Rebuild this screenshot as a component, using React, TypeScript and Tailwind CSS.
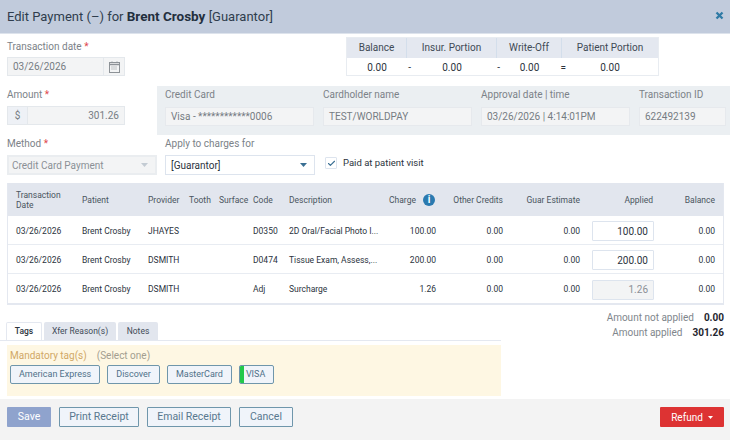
import { Check } from "lucide-react";

const ROW_GRID =
  "grid grid-cols-[66px_66px_41px_30px_34px_36px_100px_47px_67px_77px_75px_60px] items-center px-2";

const rows = [
  { provider: "JHAYES", code: "D0350", description: "2D Oral/Facial Photo I...", charge: "100.00", applied: "100.00" },
  { provider: "DSMITH", code: "D0474", description: "Tissue Exam, Assess,...", charge: "200.00", applied: "200.00" },
  { provider: "DSMITH", code: "Adj", description: "Surcharge", charge: "1.26", applied: "1.26", locked: true },
];

const Caret = ({ color }: { color: string }) => (
  <svg width="7" height="4" viewBox="0 0 7 4" style={{ color }}>
    <path d="M0 0h7L3.500 4z" fill="currentColor" />
  </svg>
);

const Req = () => <span className="text-[#e0474c]"> *</span>;

const Label = ({ text, req }: { text: string; req?: boolean }) => (
  <div className="text-[10px] leading-[12px] text-[#7c8288]">
    {text}
    {req && <Req />}
  </div>
);

const CardField = ({ label, value, width }: { label: string; value: string; width: string }) => (
  <div className={`flex shrink-0 flex-col ${width}`}>
    <Label text={label} />
    <div className="mt-[6px] flex h-[19px] items-center whitespace-nowrap border border-[#e6e9ed] bg-[#f3f4f5] px-[5px] text-[10px] text-[#767c83]">
      {value}
    </div>
  </div>
);

const Tag = ({ text, on }: { text: string; on?: boolean }) => (
  <div className="flex h-[19px] items-center overflow-hidden rounded-[2px] border border-[#6f96ab] bg-[#f0f4fa] text-[9px] text-[#4f7189]">
    {on && <div className="mr-[2px] h-full w-[4px] bg-[#22c84a]" />}
    <span className={on ? "pr-2" : "px-2"}>{text}</span>
  </div>
);

const FooterButton = ({ text, width }: { text: string; width: string }) => (
  <button className={`h-[20px] ${width} rounded-[1px] border border-[#6f96ab] bg-[#f0f4fa] text-[10.5px] text-[#58788f]`}>
    {text}
  </button>
);

export default function App() {
  return (
    <div className="flex h-[440px] w-[730px] flex-col overflow-hidden bg-white font-['Roboto',sans-serif]">
      <div className="flex h-[34px] shrink-0 items-center justify-between border-b border-[#dde3ec] bg-[#c1cbdc] pl-[7px] pr-[6px]">
        <div className="text-[13px] text-[#2f3d4d]">
          Edit Payment (–) for <span className="text-[13.5px] font-bold text-[#232f3e]">Brent Crosby</span> [Guarantor]
        </div>
        <svg width="9" height="9" viewBox="0 0 9 9" className="mb-[2px]">
          <path d="M1.500 1.500l6 6M7.500 1.500l-6 6" stroke="#2f7aa5" strokeWidth="2.300" />
        </svg>
      </div>

      <div className="flex h-[52px] shrink-0 pl-[7px] pt-[7px]">
        <div className="w-[339px]">
          <Label text="Transaction date" req />
          <div className="mt-[4px] flex h-[19px] w-[118px] items-center border border-[#e4e8ec] bg-[#f3f4f5]">
            <div className="flex-1 pl-[5px] text-[10px] text-[#767c83]">03/26/2026</div>
            <div className="flex h-full w-[21px] items-center justify-center border-l border-[#e4e8ec]">
              <svg width="11" height="12" viewBox="0 0 11 12" fill="none" stroke="#8d9297">
                <rect x=".5" y="1.500" width="10" height="10" />
                <path d="M.5 3.500h10" strokeWidth="1.500" />
                <path d="M3 .5v2M8 .5v2M2.500 6h6M2.500 8h6" strokeDasharray="1 1" />
              </svg>
            </div>
          </div>
        </div>
        <div className="mt-[-4px] h-[39px] w-[313px] border border-[#e8ecf1] text-[10px] text-[#414a55]">
          <div className="grid h-[20px] grid-cols-[60px_90px_65px_1fr] items-center bg-[#e4e8f0] text-center">
            <div className="border-r border-[#d3deeb] leading-[20px]">Balance</div>
            <div className="border-r border-[#d3deeb] leading-[20px]">Insur. Portion</div>
            <div className="border-r border-[#d3deeb] leading-[20px]">Write-Off</div>
            <div className="leading-[20px]">Patient Portion</div>
          </div>
          <div className="grid h-[18px] grid-cols-[60px_90px_65px_1fr] items-center text-center text-[#2b333d]">
            <div className="relative">0.00<span className="absolute right-[-4px]">-</span></div>
            <div className="relative">0.00<span className="absolute right-[-3px]">-</span></div>
            <div className="relative">0.00<span className="absolute right-[-4px]">=</span></div>
            <div>0.00</div>
          </div>
        </div>
      </div>

      <div className="flex h-[49px] shrink-0">
        <div className="w-[157px] shrink-0 pl-[7px] pt-[3px]">
          <Label text="Amount" req />
          <div className="mt-[5px] flex h-[19px] w-[118px] items-center border border-[#e4e8ec] bg-[#f3f4f5] text-[10px] text-[#767c83]">
            <div className="flex h-full w-[20px] items-center justify-center border-r border-[#e4e8ec] bg-[#eef1f6]">$</div>
            <div className="flex-1 pr-[5px] text-right">301.26</div>
          </div>
        </div>
        <div className="flex min-w-0 flex-1 gap-[9px] bg-[#ebeff2] pl-[8px] pt-[3px]">
          <CardField label="Credit Card" value="Visa - ************0006" width="w-[149px]" />
          <CardField label="Cardholder name" value="TEST/WORLDPAY" width="w-[149px]" />
          <CardField label="Approval date | time" value="03/26/2026 | 4:14:01PM" width="w-[149px]" />
          <CardField label="Transaction ID" value="622492139" width="w-[87px]" />
        </div>
      </div>

      <div className="flex h-[48px] shrink-0 pl-[7px] pt-[3px]">
        <div className="mr-[8px] w-[150px]">
          <Label text="Method" req />
          <div className="mt-[5px] flex h-[20px] items-center justify-between border-2 border-[#eaedf0] bg-[#f3f4f5] pl-[3px] pr-[7px] text-[10px] text-[#8b9095]">
            Credit Card Payment
            <Caret color="#c3cbd3" />
          </div>
        </div>
        <div className="mr-[10px] w-[150px]">
          <Label text="Apply to charges for" />
          <div className="mt-[5px] flex h-[20px] items-center justify-between border border-[#dde4ee] bg-white pl-[5px] pr-[7px] text-[10px] text-[#2b333d]">
            [Guarantor]
            <Caret color="#3a6f93" />
          </div>
        </div>
        <div className="flex h-[32px] items-end gap-[6px] pb-[1px]">
          <div className="flex h-[12px] w-[12px] items-center justify-center rounded-[1px] border border-[#dde4ee]">
            <Check size={9} strokeWidth={3} color="#3a6f93" />
          </div>
          <span className="text-[9.5px] leading-[12px] text-[#2b333d]">Paid at patient visit</span>
        </div>
      </div>

      <div className="mx-[7px] h-[122px] w-[717px] shrink-0 border-x border-b-2 border-[#e4e8f0] text-[8.5px] text-[#2b333d]">
        <div className={`${ROW_GRID} h-[33px] bg-[#e2e6ee] leading-[10px] text-[#4a5560]`}>
          <div>
            Transaction
            <br />
            Date
          </div>
          <div>Patient</div>
          <div>Provider</div>
          <div>Tooth</div>
          <div>Surface</div>
          <div>Code</div>
          <div>Description</div>
          <div className="flex items-center justify-between">
            Charge
            <span className="mr-[1px] flex h-[12px] w-[12px] items-center justify-center rounded-full bg-[#2a7ab0] text-[10px] font-bold text-white">
              i
            </span>
          </div>
          <div className="text-right">Other Credits</div>
          <div className="text-right">Guar Estimate</div>
          <div className="pr-[2px] text-right">Applied</div>
          <div className="text-right">Balance</div>
        </div>
        {rows.map((row, i) => (
          <div key={i} className={`${ROW_GRID} h-[29px] pt-[2px] ${i < 2 ? "border-b border-[#e8ecf2]" : ""}`}>
            <div>03/26/2026</div>
            <div>Brent Crosby</div>
            <div>{row.provider}</div>
            <div />
            <div />
            <div>{row.code}</div>
            <div className="whitespace-nowrap">{row.description}</div>
            <div className="text-right">{row.charge}</div>
            <div className="text-right">0.00</div>
            <div className="text-right">0.00</div>
            <div className="flex justify-end pr-[1px]">
              <div
                className={`flex h-[20px] w-[62px] items-center justify-end rounded-[1px] border border-[#dde4ee] pr-[5px] text-[10px] ${
                  row.locked ? "bg-[#f3f4f5] text-[#8b9095]" : "bg-white text-[#2b333d]"
                }`}
              >
                {row.applied}
              </div>
            </div>
            <div className="text-right">0.00</div>
          </div>
        ))}
      </div>

      <div className="flex h-[94px] shrink-0">
        <div className="w-[501px] pt-[17px]">
          <div className="flex h-[19px] gap-[2px] border-b border-[#e4e8f0] pl-[6px] text-[8.5px] text-[#3f4b58]">
            <div className="flex w-[36px] items-center justify-center rounded-t-[2px] border border-b-0 border-[#e4e8f0] bg-white font-medium text-[#2b333d]">Tags</div>
            <div className="flex w-[72px] items-center justify-center rounded-t-[2px] bg-[#e2e6ee]">Xfer Reason(s)</div>
            <div className="flex w-[40px] items-center justify-center rounded-t-[2px] bg-[#e2e6ee]">Notes</div>
          </div>
          <div className="ml-[7px] mt-[4px] h-[51px] bg-[#fef7e3] pl-[3px] pt-[5px]">
            <div className="text-[10px] leading-[12px]">
              <span className="text-[#d1a866]">Mandatory tag(s)</span>
              <span className="ml-[10px] text-[#a39e90]">(Select one)</span>
            </div>
            <div className="mt-[3px] flex gap-[7px]">
              <Tag text="American Express" />
              <Tag text="Discover" />
              <Tag text="MasterCard" />
              <Tag text="VISA" on />
            </div>
          </div>
        </div>
        <div className="flex flex-1 flex-col items-end gap-[3px] pr-[6px] pt-[7px] text-[10px] leading-[12px] text-[#80868c]">
          <div>
            Amount not applied<span className="ml-[10px] font-bold text-[#1f2630]">0.00</span>
          </div>
          <div>
            Amount applied<span className="ml-[10px] font-bold text-[#1f2630]">301.26</span>
          </div>
        </div>
      </div>

      <div className="flex flex-1 items-start justify-between bg-[#f3f3f3] pl-[7px] pr-[6px] pt-[8px]">
        <div className="flex gap-[8px]">
          <button className="h-[20px] w-[44px] rounded-[1px] bg-[#8fa3cd] text-[10.5px] text-white">Save</button>
          <FooterButton text="Print Receipt" width="w-[80px]" />
          <FooterButton text="Email Receipt" width="w-[84px]" />
          <FooterButton text="Cancel" width="w-[54px]" />
        </div>
        <button className="flex h-[20px] w-[64px] items-center justify-center gap-[5px] rounded-[1px] bg-[#dd3333] text-[10px] text-white">
          Refund
          <svg width="5" height="3" viewBox="0 0 5 3">
            <path d="M0 0h5L2.500 3z" fill="white" />
          </svg>
        </button>
      </div>
    </div>
  );
}
